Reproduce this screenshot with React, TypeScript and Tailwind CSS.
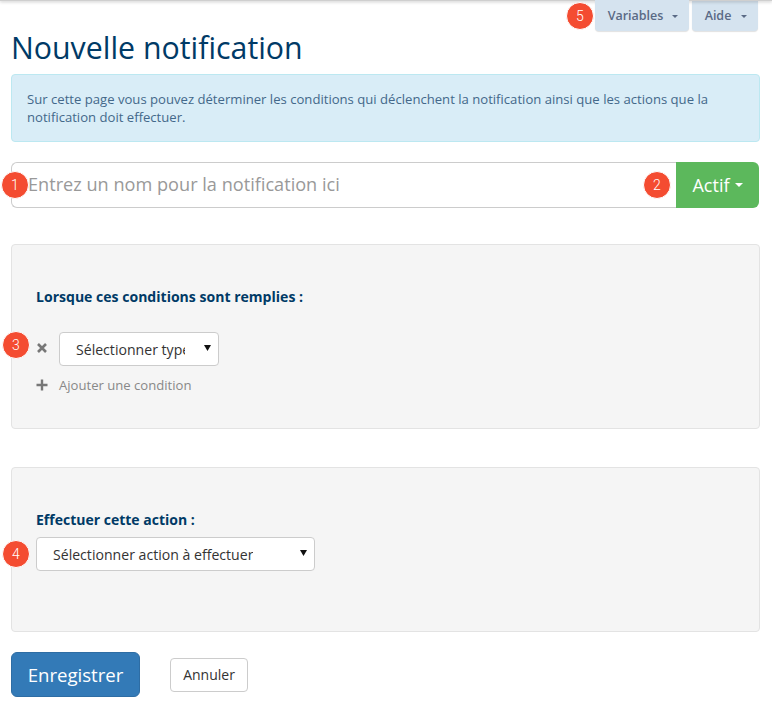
import React from "react";

function Badge({ n, className }: { n: number; className: string }) {
  return (
    <div className={"absolute z-10 flex h-[28px] w-[28px] items-center justify-center rounded-full border border-white bg-[#f44c31] pb-[1px] font-['Roboto',sans-serif] text-[14px] font-light leading-none text-white " + className}>
      {n}
    </div>
  );
}

function Caret({ className }: { className: string }) {
  return <span className={"inline-block h-0 w-0 border-x-transparent " + className} />;
}

function FakeSelect({ label, className, textClass }: { label: string; className: string; textClass: string }) {
  return (
    <div className={"relative flex h-[34px] items-center rounded-[4px] border border-[#cccccc] bg-white pl-[16px] pt-[1px] text-[14.1px] text-[#333333] " + className}>
      <span className={"block overflow-hidden whitespace-nowrap " + textClass}>{label}</span>
      <svg className="absolute right-[7px] top-[12px]" width="7" height="6" viewBox="0 0 7 6"><path d="M0 0H7L3.5 6Z" fill="#111" /></svg>
    </div>
  );
}

export default function App() {
  return (
    <div className="relative h-[706px] w-[772px] overflow-hidden bg-white pl-[11px] pr-[12px] font-['Open_Sans',sans-serif]">
      <div className="absolute inset-x-0 top-0 h-[1px] bg-[#cfcfcf] shadow-[0_1px_3px_rgba(0,0,0,0.35)]" />
      <div className="flex h-[31px] justify-end gap-[3px] pr-[2px]">
        <div className="relative flex h-[31px] w-[94px] items-center justify-center gap-[9px] rounded-b-[4px] bg-[#d5e3ef] pl-[2px] pt-[1px] text-[12.5px] font-semibold text-[#5a6a85] shadow-[0_1px_1px_rgba(0,0,0,0.12)]">
          Variables <Caret className="border-x-[3px] border-t-[3px] border-t-[#5a6a85]" />
          <Badge n={5} className="left-[-29px] top-[2px]" />
        </div>
        <div className="flex h-[31px] w-[66px] items-center justify-center gap-[10px] rounded-b-[4px] bg-[#d5e3ef] pl-[2px] pt-[1px] text-[12.5px] font-semibold text-[#5a6a85] shadow-[0_1px_1px_rgba(0,0,0,0.12)]">
          Aide <Caret className="border-x-[3px] border-t-[3px] border-t-[#5a6a85]" />
        </div>
      </div>
      <h1 className="mt-[-1px] h-[44px] text-[30.3px] font-normal leading-[36px] text-[#003a66]">Nouvelle notification</h1>
      <div className="h-[68px] rounded-[4px] border border-[#bce8f1] bg-[#d9edf7] px-[15px] pt-[15px] text-[13.12px] leading-[18px] text-[#43688a]">
        Sur cette page vous pouvez déterminer les conditions qui déclenchent la notification ainsi que les actions que la notification doit effectuer.
      </div>
      <div className="relative mt-[20px] mr-[1px] flex h-[46px]">
        <div className="flex flex-1 items-center rounded-l-[6px] border border-r-0 border-[#cccccc] bg-white pb-[1px] pl-[16px] text-[18.15px] text-[#999999]">
          Entrez un nom pour la notification ici
        </div>
        <div className="flex w-[83px] items-center justify-center gap-[5px] rounded-r-[6px] bg-[#5cb85c] text-[18px] text-white">
          Actif <Caret className="border-x-[4px] border-t-[4px] border-t-white" />
        </div>
        <Badge n={1} className="left-[-10px] top-[9px]" />
        <Badge n={2} className="left-[632px] top-[9px]" />
      </div>
      <section className="relative mt-[36px] h-[185px] rounded-[4px] border border-[#e3e3e3] bg-[#f5f5f5] pl-[24px] pt-[43px]">
        <div className="h-[44px] text-[14.05px] font-bold leading-[18px] text-[#003a66]">Lorsque ces conditions sont remplies :</div>
        <div className="flex items-center">
          <svg width="12" height="12" viewBox="0 0 12 12" className="mb-[3px] mr-[11px]"><path d="M2 2L10 10M10 2L2 10" stroke="#777" strokeWidth="2.6" /></svg>
          <FakeSelect label="Sélectionner type" className="w-[160px]" textClass="w-[109px]" />
        </div>
        <div className="mt-[10px] flex h-[20px] items-center">
          <svg width="12" height="12" viewBox="0 0 12 12" className="mb-[2px] mr-[11px]"><path d="M6 0.5V11.5M0.5 6H11.5" stroke="#777" strokeWidth="2.4" /></svg>
          <span className="text-[13.1px] text-[#888888]">Ajouter une condition</span>
        </div>
        <Badge n={3} className="left-[-10px] top-[86px]" />
      </section>
      <section className="relative mt-[38px] h-[165px] rounded-[4px] border border-[#e3e3e3] bg-[#f5f5f5] pl-[24px] pt-[43px]">
        <div className="h-[26px] text-[14px] font-bold leading-[18px] text-[#003a66]">Effectuer cette action :</div>
        <FakeSelect label="Sélectionner action à effectuer" className="w-[279px]" textClass="" />
        <Badge n={4} className="left-[-10px] top-[72px]" />
      </section>
      <div className="mt-[20px] flex items-center gap-[30px]">
        <div className="flex h-[45px] w-[129px] items-center justify-center rounded-[6px] border border-[#2e6da4] bg-[#337ab7] text-[18.6px] text-white">Enregistrer</div>
        <div className="flex h-[34px] w-[78px] items-center justify-center rounded-[4px] border border-[#cccccc] bg-white text-[14px] text-[#333333]">Annuler</div>
      </div>
    </div>
  );
}
